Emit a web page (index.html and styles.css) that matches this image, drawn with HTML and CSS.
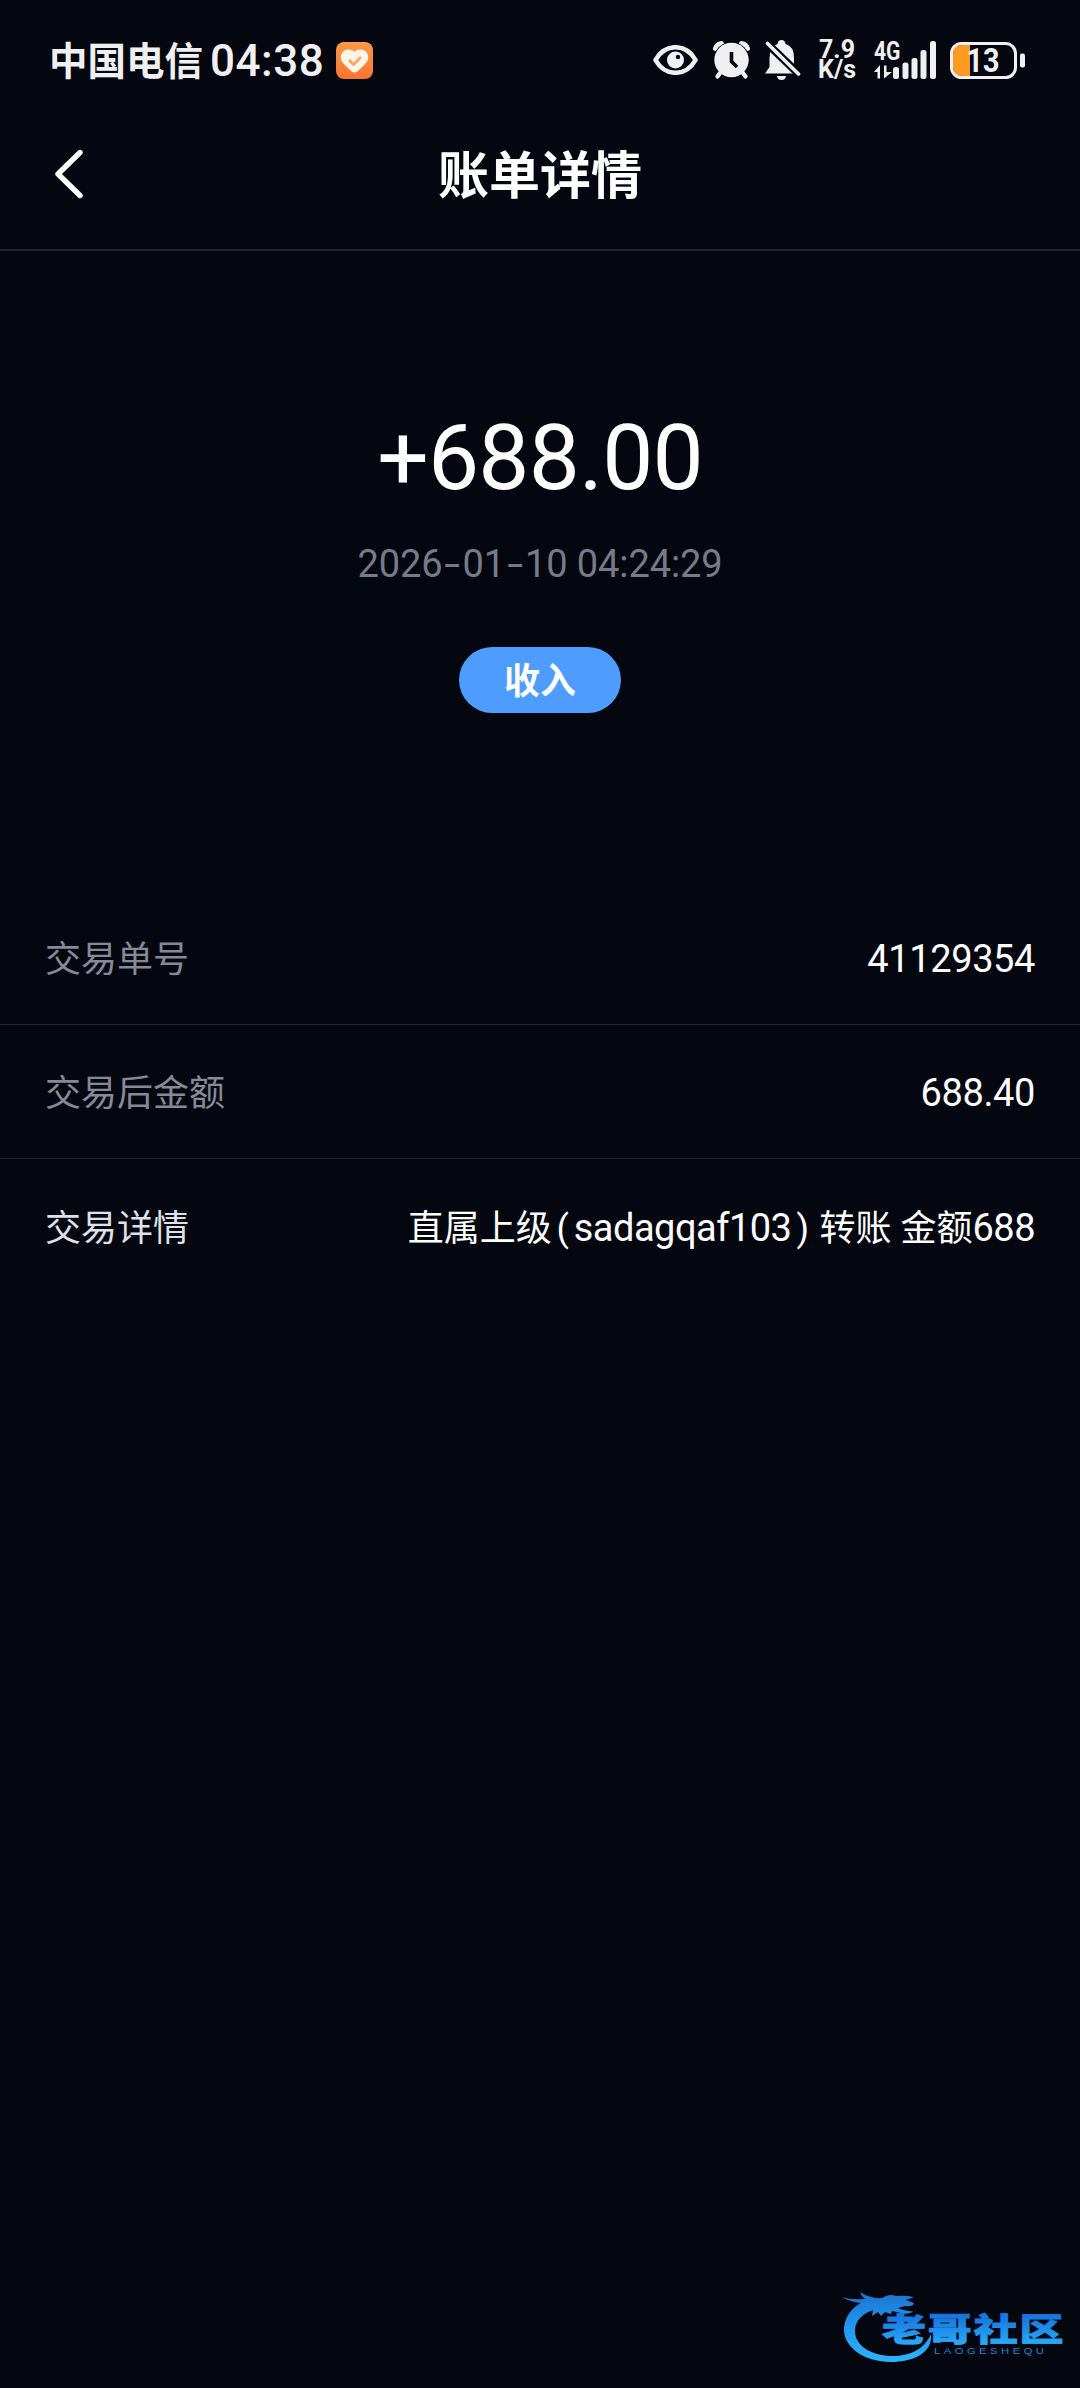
FILE: index.html
```
<!DOCTYPE html>
<html lang="zh-CN">
<head>
<meta charset="utf-8">
<title>账单详情</title>
<link rel="stylesheet" href="styles.css">
</head>
<body>
<div class="screen">
  <div class="status">
    <span class="carrier">中国电信</span>
    <span class="time">04:38</span>
    <svg class="app-badge" width="37" height="37" viewBox="0 0 37 37">
      <defs><linearGradient id="orange" x1="0" y1="0" x2="0" y2="1"><stop offset="0" stop-color="#fb9a4a"/><stop offset="1" stop-color="#f97430"/></linearGradient></defs>
      <rect width="37" height="37" rx="8" fill="url(#orange)"/>
      <path d="M18.500 10C16 7 11 7 8 9C4 12 4 17 6.500 20.500L15 29Q18.500 32 22 29L30.500 20.500C33 17 33 12 29 9C26 7 21 7 18.500 10Z" fill="#fff4e6"/>
      <path d="M13 18l4.500 4.500L25 15" fill="none" stroke="#f3ab5c" stroke-width="2.800"/>
    </svg>
    <div class="indicators">
      <svg class="eye" width="45" height="30" viewBox="0 0 45 30">
        <path d="M2.500 15C12-2 33-2 42.500 15C33 32 12 32 2.500 15Z" fill="none" stroke="#f0f0f2" stroke-width="4.600" stroke-linejoin="round"/>
        <circle cx="22.500" cy="15" r="8.500" fill="#f0f0f2"/>
        <circle cx="25" cy="12" r="2.200" fill="#04070f"/>
      </svg>
      <svg class="alarm" width="37" height="38" viewBox="0 0 37 38">
        <path d="M2.500 7.500Q4 3 8.500 2.500M28.500 2.500Q33 3 34.500 7.500" fill="none" stroke="#f0f0f2" stroke-width="5" stroke-linecap="round"/>
        <circle cx="18.500" cy="19" r="18" fill="#04070f"/>
        <path d="M8.500 30l-4 5.500M28.500 30l4 5.500" stroke="#f0f0f2" stroke-width="4.200" stroke-linecap="round"/>
        <circle cx="18.500" cy="19" r="17.200" fill="#f0f0f2"/>
        <path d="M18.500 11v9.500l5.500 5.500" fill="none" stroke="#04070f" stroke-width="3.600"/>
      </svg>
      <svg class="bell" width="36" height="40" viewBox="0 0 36 40">
        <path d="M0 33.500L4.500 27V18Q5 6 12.500 4Q13 0 16.500 0Q20 0 20.500 4Q29 6 29 18V33.500ZM12 36H21Q20.500 40 16.500 40Q12.500 40 12 36Z" fill="#f0f0f2"/>
        <path d="M2 3.500L34 34" stroke="#04070f" stroke-width="8"/>
        <path d="M2.500 3.500L33.500 34" stroke="#f0f0f2" stroke-width="3.600" stroke-linecap="round"/>
      </svg>
      <div class="speed"><span>7.9</span><span>K/s</span></div>
      <svg class="signal" width="62" height="38" viewBox="0 0 62 38">
        <text class="net" x="0" y="18.500" textLength="26.500" lengthAdjust="spacingAndGlyphs">4G</text>
        <path d="M0 31L6 24V37.500H3.500V31ZM10 24.500H12.500V31H18L10 37.500Z" fill="#f0f0f2"/>
        <g fill="#f0f0f2"><rect x="19" y="26" width="6" height="12" rx="2.500"/><rect x="28.500" y="21.500" width="6" height="16.500" rx="2.500"/><rect x="37.500" y="17" width="6" height="21" rx="2.500"/><rect x="46.500" y="9" width="6" height="29" rx="2.500"/><rect x="56" y="0" width="6" height="38" rx="2.500"/></g>
      </svg>
      <svg class="battery" width="76" height="37" viewBox="0 0 76 37">
        <path d="M20 3H12Q3 3 3 12V25Q3 34 12 34H20Z" fill="#ff9b20"/>
        <rect x="1.500" y="1.500" width="64" height="34" rx="10" fill="none" stroke="#f0f0f2" stroke-width="3"/>
        <rect x="70" y="11.500" width="5" height="14" rx="2" fill="#f0f0f2"/>
        <text class="level" x="16.500" y="30" textLength="33" lengthAdjust="spacingAndGlyphs">13</text>
      </svg>
    </div>
  </div>

  <div class="header">
    <svg class="back" width="30" height="50" viewBox="0 0 30 50"><path d="M26 3.500L4 25L26 46.500" fill="none" stroke="#fff" stroke-width="5.400" stroke-linecap="round" stroke-linejoin="round"/></svg>
    <h1 class="title">账单详情</h1>
  </div>

  <div class="summary">
    <div class="amount">+688.00</div>
    <div class="date">2026<i>-</i>01<i>-</i>10 04:24:29</div>
    <div class="tag">收入</div>
  </div>

  <div class="rows">
    <div class="row"><span class="label">交易单号</span><span class="value">41129354</span></div>
    <div class="row"><span class="label">交易后金额</span><span class="value">688.40</span></div>
    <div class="row last"><span class="label">交易详情</span><span class="value detail">直属上级<b class="open">(</b><b class="latin">sadagqaf103</b><b class="close">)</b>转账 金额<b class="latin">688</b></span></div>
  </div>

  <svg class="watermark" width="226" height="76" viewBox="0 0 226 76">
    <defs><linearGradient id="blue" gradientUnits="userSpaceOnUse" x1="0" y1="8" x2="0" y2="72"><stop offset="0" stop-color="#1b78d2"/><stop offset=".4" stop-color="#1f93ee"/><stop offset="1" stop-color="#2bb2fb"/></linearGradient>
    <linearGradient id="word" x1="0" y1=".3" x2="0" y2=".9"><stop offset="0" stop-color="#1878df"/><stop offset="1" stop-color="#29aefb"/></linearGradient></defs>
    <g fill="url(#blue)">
      <path d="M33 10C14 14 3 27 3 43C4 60 24 74 50 74C72 74 92 65 90 46C83 62 68 68 52 68C31 68 14 58 14 43C14 32 22 25 35 21Z"/>
      <path d="M1 9Q10 12 24 11Q20 8 19 4Q30 11 41 10Q48 5 55 8Q65 7 73 9Q68 11 65 12L73 15Q72 19 64 18L57 20Q65 24 72 23Q69 27 60 25L51 23L50 26L44 24L40 28L37 24L31 28L32 22L24 24L29 15Q12 16 1 9Z"/>
    </g>
    <text class="brand" transform="translate(41 53.400) scale(1.100 .800)" textLength="165" fill="url(#word)" stroke="url(#word)">老哥社区</text>
    <text class="pinyin" transform="translate(93 66) scale(1.250 1)" textLength="88">LAOGESHEQU</text>
  </svg>
</div>
</body>
</html>
```
FILE: styles.css
```
* { box-sizing: border-box; }
body {
  margin: 0;
  background: #04070f;
  color: #fff;
  font-family: Roboto, "Noto Sans CJK SC", sans-serif;
}
.screen { position: relative; width: 1080px; height: 2388px; overflow: hidden; }

.status { display: flex; align-items: center; height: 120px; padding: 0 54px 0 49px; color: #f0f0f2; }
.carrier { padding-top: 3px; font-size: 38.500px; font-weight: 700; line-height: 60px; white-space: nowrap; }
.time { margin-left: 7px; padding-top: 2px; font-size: 44px; font-weight: 500; line-height: 60px; letter-spacing: 0.500px; }
.app-badge { margin-left: 12px; }
.indicators { display: flex; align-items: center; margin-left: auto; }
.alarm { margin-left: 15px; }
.bell { margin-left: 15px; }
.speed { display: flex; flex-direction: column; align-items: center; width: 40px; margin-left: 16px; font-size: 25px; font-weight: 700; line-height: 20px; }
.signal { margin-left: 17px; overflow: visible; }
.battery { margin-left: 14px; overflow: visible; }
.net { font: 700 25px Roboto, sans-serif; fill: #f0f0f2; }
.level { font: 700 33px Roboto, sans-serif; fill: #f0f0f2; }

.header { display: grid; grid-template-columns: 90px 1fr 90px; align-items: center; height: 131px; padding-bottom: 22px; border-bottom: 2px solid #22252c; }
.back { margin-left: 54px; }
.title { margin: 0; padding-top: 6px; text-align: center; font-size: 51px; line-height: 70px; font-weight: 700; }

.summary { display: flex; flex-direction: column; align-items: center; height: 640px; padding-top: 152px; }
.amount { font-size: 91px; line-height: 110px; letter-spacing: -0.800px; }
.date { margin-top: 26px; font-size: 38px; line-height: 50px; font-weight: 400; letter-spacing: -0.100px; color: #777b89; white-space: nowrap; }
.date i { display: inline-block; width: 20px; text-align: center; font-style: normal; transform: scaleX(1.5); }
.tag { display: flex; align-items: center; justify-content: center; width: 162px; height: 66px; margin-top: 58px; padding-bottom: 4px; border-radius: 33px; background: #4f9cff; font-size: 36px; font-weight: 700; }

.row { display: flex; align-items: center; justify-content: space-between; height: 134px; padding: 0 45px; border-bottom: 1px solid #22252d; font-size: 36px; }
.row.last { border-bottom: 0; }
.label { padding-bottom: 3px; color: #868a98; }
.last .label { color: #dfe1ea; }
.value { padding-top: 2px; font-size: 38px; letter-spacing: -0.400px; }
.detail { padding: 0 0 3px; font-size: 36px; letter-spacing: 0; white-space: nowrap; }
.detail b { display: inline-block; font-weight: 400; }
.detail .latin { font-size: 38px; letter-spacing: -0.500px; }
.detail .open { width: 22px; text-align: center; }
.detail .close { width: 28px; padding-left: 5px; }

.watermark { position: absolute; left: 841px; top: 2288px; }
.brand { font: 900 40px "Noto Sans CJK SC", sans-serif; stroke-width: 1px; }
.pinyin { font: 400 9px "Liberation Sans", sans-serif; fill: #2384cc; }
```
